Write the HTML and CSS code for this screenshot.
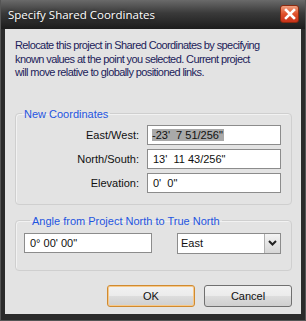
FILE: index.html
```html
<!DOCTYPE html>
<html lang="en">
<head>
    <meta charset="UTF-8">
    <title>Specify Shared Coordinates</title>
    <link rel="stylesheet" href="styles.css">
</head>
<body>
    <div class="window">
        <!-- Barra de titulo -->
        <div class="titlebar">
            <span class="title">Specify Shared Coordinates</span>
            <button class="close-btn" aria-label="Close">
                <svg width="12" height="12" viewBox="0 0 12 12">
                    <path d="M2 2 L10 10 M10 2 L2 10" stroke="#fff" stroke-width="2.6" stroke-linecap="square"/>
                </svg>
            </button>
        </div>

        <div class="client">
            <p class="intro">Relocate this project in Shared Coordinates by specifying<br>known values at the point you selected. Current project<br>will move relative to globally positioned links.</p>

            <fieldset class="group coords">
                <legend>New Coordinates</legend>
                <label>East/West:</label>
                <div class="field"><span class="selected">-23'&nbsp; 7 51/256"</span></div>
                <label>North/South:</label>
                <div class="field">13'&nbsp; 11 43/256"</div>
                <label>Elevation:</label>
                <div class="field">0'&nbsp; 0"</div>
            </fieldset>

            <fieldset class="group angle">
                <legend>Angle from Project North to True North</legend>
                <div class="field wide">0° 00' 00"</div>
                <div class="combo">
                    <span>East</span>
                    <span class="combo-btn">
                        <svg width="9" height="6" viewBox="0 0 9 6">
                            <path d="M1 1 L4.5 4.5 L8 1" fill="none" stroke="#222" stroke-width="2"/>
                        </svg>
                    </span>
                </div>
            </fieldset>

            <div class="buttons">
                <button class="btn default">OK</button>
                <button class="btn">Cancel</button>
            </div>
        </div>
    </div>
</body>
</html>
```

FILE: styles.css
```css
body {
    margin: 0;
    padding: 0;
    background: #ffffff;
    font-family: "Liberation Sans", Arial, sans-serif;
}

/* Ventana */
.window {
    width: 306px;
    height: 321px;
    box-sizing: border-box;
    display: flex;
    flex-direction: column;
    background: #2b2b2b;
    padding: 0 4px 6px 4px;
    border-left: 1px solid #555;
    border-right: 1px solid #555;
    border-bottom: 1px solid #555;
}

.titlebar {
    height: 29px;
    margin: 0 -4px;
    padding: 0 6px 0 7px;
    display: flex;
    align-items: center;
    justify-content: space-between;
    background: linear-gradient(to bottom, #6a6a6a 0%, #3a3a3a 45%, #1c1c1c 100%);
}

.title {
    color: #ffffff;
    font-family: "Open Sans", "Liberation Sans", sans-serif;
    font-size: 11.5px;
    text-shadow: 0 0 3px rgba(0, 0, 0, 0.6);
    margin-top: -1px;
}

.close-btn {
    width: 19px;
    height: 18px;
    margin-top: -1px;
    padding: 0;
    border: 1px solid #8a2a10;
    border-radius: 3px;
    background: linear-gradient(to bottom, #f0a080 0%, #e0502a 50%, #c8321a 100%);
    display: flex;
    align-items: center;
    justify-content: center;
}

/* Area cliente */
.client {
    flex: 1;
    background: #e3e3e3;
    padding: 10px 9px 0 10px;
    display: flex;
    flex-direction: column;
    font-size: 11px;
    color: #101010;
}

.intro {
    margin: 0;
    color: #1c1c5a;
    line-height: 13.5px;
    letter-spacing: -0.6px;
    white-space: nowrap;
}

.group {
    margin: 0;
    border: 1px solid #cfcfcf;
    border-radius: 4px;
    box-shadow: inset 1px 1px 0 #f2f2f2;
    padding: 0;
}

.group legend {
    color: #1f55e0;
    padding: 0 2px;
    margin-left: 6px;
    font-size: 11px;
}

.coords {
    margin-top: 28px;
    display: grid;
    grid-template-columns: 123px 134px;
    column-gap: 8px;
    row-gap: 4px;
    align-items: center;
    padding: 5px 0 11px 0;
}

.coords label {
    text-align: right;
}

.field {
    height: 20px;
    box-sizing: border-box;
    background: #ffffff;
    border: 1px solid #8c8c8c;
    padding: 0 5px;
    display: flex;
    align-items: center;
    white-space: nowrap;
}

.selected {
    background: #a9a9a9;
    margin-left: -1px;
    padding-right: 1px;
}

.angle {
    margin-top: 10px;
    padding: 6px 10px 16px 8px;
    display: flex;
    justify-content: space-between;
}

.field.wide {
    width: 128px;
}

.combo {
    width: 104px;
    height: 21px;
    box-sizing: border-box;
    background: #ffffff;
    border: 1px solid #8c8c8c;
    display: flex;
    align-items: center;
    justify-content: space-between;
    padding-left: 3px;
}

.combo-btn {
    width: 16px;
    height: 19px;
    box-sizing: border-box;
    border-left: 1px solid #b0b0b0;
    background: linear-gradient(to bottom, #f4f4f4, #d6d6d6);
    display: flex;
    align-items: center;
    justify-content: center;
}

/* Botones */
.buttons {
    margin-top: 14px;
    display: flex;
    justify-content: flex-end;
    gap: 9px;
}

.btn {
    width: 88px;
    height: 22px;
    font-family: "Liberation Sans", Arial, sans-serif;
    font-size: 11px;
    color: #101010;
    border: 1px solid #707070;
    border-radius: 3px;
    background: linear-gradient(to bottom, #f2f2f2 0%, #ebebeb 50%, #dddddd 51%, #cfcfcf 100%);
}

.btn.default {
    border-color: #d08a30;
    box-shadow: inset 0 0 0 1px #f7c98a;
}
```
